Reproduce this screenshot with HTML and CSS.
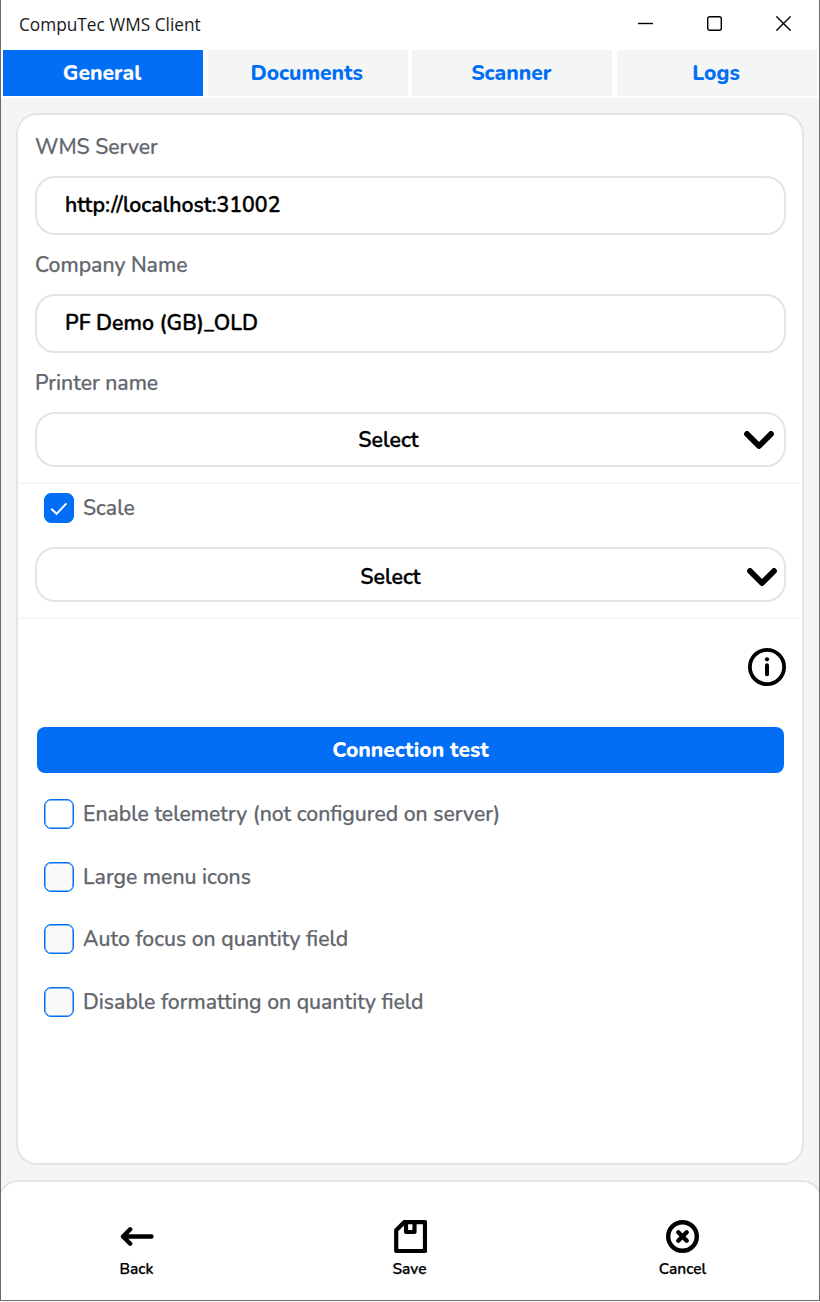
FILE: index.html
```html
<!DOCTYPE html>
<html lang="en">
<head>
<meta charset="utf-8">
<title>CompuTec WMS Client</title>
<link rel="stylesheet" href="styles.css">
</head>
<body>
<div class="window">
  <header class="titlebar">
    <span class="title">CompuTec WMS Client</span>
    <div class="controls">
      <svg width="15" height="15" viewBox="0 0 15 15"><path d="M0 7.5h15"/></svg>
      <svg width="15" height="15" viewBox="0 0 15 15"><rect x=".7" y=".7" width="13.6" height="13.6" rx="2"/></svg>
      <svg width="15" height="15" viewBox="0 0 15 15"><path d="M.4.4l14.2 14.2M14.6.4L.4 14.6"/></svg>
    </div>
  </header>

  <nav class="tabs">
    <div class="tab tab-active">General</div>
    <div class="tab">Documents</div>
    <div class="tab">Scanner</div>
    <div class="tab">Logs</div>
  </nav>

  <main class="content">
    <section class="card">
      <div class="label">WMS Server</div>
      <div class="field">http://localhost:31002</div>
      <div class="label">Company Name</div>
      <div class="field">PF Demo (GB)_OLD</div>
      <div class="label">Printer name</div>
      <div class="select printer">
        <span class="select-text">Select</span>
        <svg class="chevron" width="30" height="18" viewBox="0 0 30 18"><path d="M3 3l12 12L27 3"/></svg>
      </div>
      <div class="rule"></div>
      <div class="check scale-check">
        <span class="box box-on"><svg width="18" height="14" viewBox="0 0 18 14"><path d="M1.2 6.8l5.4 5L16.4 1.4"/></svg></span>
        <span>Scale</span>
      </div>
      <div class="select scale">
        <span class="select-text">Select</span>
        <svg class="chevron" width="30" height="18" viewBox="0 0 30 18"><path d="M3 3l12 12L27 3"/></svg>
      </div>
      <div class="rule"></div>
      <div class="info">
        <svg width="38" height="38" viewBox="0 0 38 38"><circle class="info-ring" cx="19" cy="19" r="17.1"/><circle cx="19" cy="11.3" r="2.1"/><path class="info-stem" d="M19 17.3v9"/></svg>
      </div>
      <div class="button">Connection test</div>
      <div class="options">
        <div class="check"><span class="box box-empty"></span><span>Enable telemetry (not configured on server)</span></div>
        <div class="check"><span class="box"></span><span>Large menu icons</span></div>
        <div class="check"><span class="box"></span><span>Auto focus on quantity field</span></div>
        <div class="check"><span class="box"></span><span>Disable formatting on quantity field</span></div>
      </div>
    </section>
  </main>

  <footer class="footer">
    <div class="action">
      <svg width="34" height="34" viewBox="0 0 34 34"><path d="M31.5 16.5H3.5M10.2 9.3L3 16.5l7.2 7.2"/></svg>
      <span>Back</span>
    </div>
    <div class="action">
      <svg class="save-icon" width="34" height="34" viewBox="0 0 34 34"><path d="M11.2 2.2H32V31H3.2V10.3zM13 3v9h8.5V3"/></svg>
      <span>Save</span>
    </div>
    <div class="action">
      <svg width="34" height="34" viewBox="0 0 34 34"><circle cx="16.5" cy="16.5" r="14.3"/><path d="M12.3 12.3l8.4 8.4M20.7 12.3l-8.4 8.4"/></svg>
      <span>Cancel</span>
    </div>
  </footer>
</div>
</body>
</html>
```
FILE: styles.css
```css
* { box-sizing: border-box; }

body { margin: 0; background: #fff; }

svg { display: block; flex: none; fill: none; stroke: #000; }

.window {
  display: flex;
  flex-direction: column;
  width: 820px;
  height: 1301px;
  border: 1px solid #6c6c6c;
  border-top: 0;
  background: #f4f6f6;
  font-family: Nunito, "Noto Sans", sans-serif;
  font-size: 21.2px;
  line-height: 30px;
  color: #000;
  overflow: hidden;
}

.titlebar {
  display: flex;
  justify-content: space-between;
  height: 50px;
  padding: 0 28px 0 18px;
  background: #fff;
}
.title {
  padding-top: 10px;
  font-family: "Open Sans", "Noto Sans", sans-serif;
  font-size: 17.25px;
  line-height: 29px;
  color: #1a1a1a;
}
.controls { display: flex; gap: 54px; padding-top: 16px; }
.controls svg { stroke-width: 1.4; }

.tabs {
  display: grid;
  grid-template-columns: repeat(4, 200px);
  justify-content: space-between;
  height: 48px;
  padding: 0 2px 2px;
  background: #fff;
}
.tab {
  padding-right: 2px;
  background: #f4f6f6;
  color: #016ef5;
  font-size: 21px;
  font-weight: 800;
  line-height: 46px;
  text-align: center;
}
.tab-active { background: #016ef5; color: #fff; }

.content { padding: 15px 15px 15px; }
.card {
  height: 1052px;
  padding-top: 17px;
  border: 2px solid #e4e4e4;
  border-radius: 21px;
  background: #fff;
}
.label {
  height: 44px;
  padding-left: 17px;
  font-weight: 500;
  -webkit-text-stroke: 0.25px #62666d;
  color: #62666d;
}
.field, .select {
  margin: 0 16px 0 17px;
  border: 2px solid #e4e4e4;
  border-radius: 20px;
  font-size: 21.3px;
  font-weight: 600;
  -webkit-text-stroke: 0.35px #000;
}
.field { height: 59px; margin-bottom: 15px; padding: 12px 28px; }
.select { display: flex; align-items: center; height: 55px; }
.select-text { flex: 1; text-align: center; }
.printer { padding-right: 10px; margin-bottom: 15px; }
.scale { padding: 4px 7px 0 0; margin-bottom: 15px; }
.printer .select-text { padding-right: 4px; }
.scale .select-text { padding-right: 3px; }
.chevron { stroke-width: 5.8; stroke-linecap: round; stroke-linejoin: round; }

.rule { height: 2px; margin: 0 2px; background: #f4f5f5; }

.check {
  display: flex;
  gap: 9px;
  height: 30px;
  padding-left: 26px;
  font-weight: 500;
  -webkit-text-stroke: 0.25px #62666d;
  color: #62666d;
}
.scale-check { margin: 9px 0 24px; }
.box {
  display: flex;
  align-items: center;
  justify-content: center;
  width: 30px;
  height: 30px;
  border: 1px solid #016ef5;
  border-radius: 7px;
  background: #f9f9f9;
  box-shadow: inset 0 0 0 0.5px #016ef5;
}
.box-empty { background: #fff; }
.box-on { background: #016ef5; padding-top: 2px; }
.box-on svg { stroke: #fff; stroke-width: 1.9; }

.info { display: flex; justify-content: flex-end; padding: 29px 16px 41px; }
.info svg { fill: #000; stroke: none; }
.info .info-ring { fill: none; stroke: #000; stroke-width: 3.8; }
.info .info-stem { stroke: #000; stroke-width: 4; stroke-linecap: round; }

.button {
  height: 46px;
  margin: 0 18px 0 19px;
  border-radius: 8px;
  background: #016ef5;
  color: #fff;
  font-size: 21px;
  font-weight: 800;
  line-height: 46px;
  text-align: center;
}
.options { display: flex; flex-direction: column; gap: 32.6px; padding-top: 26px; }

.footer {
  display: grid;
  grid-template-columns: repeat(3, 273px);
  flex: 1;
  margin: 0 -3px;
  padding: 38px 0 0;
  border: 2px solid #e4e4e4;
  border-width: 2px 2px 0;
  border-radius: 20px 20px 0 0;
  background: #fff;
  font-size: 15.4px;
  font-weight: 600;
  -webkit-text-stroke: 0.25px #000;
  line-height: 22px;
}
.action { display: flex; flex-direction: column; align-items: center; gap: 4px; }
.action svg { stroke-width: 4.4; stroke-linecap: round; stroke-linejoin: round; }
.action .save-icon { stroke-width: 4.2; }
```
